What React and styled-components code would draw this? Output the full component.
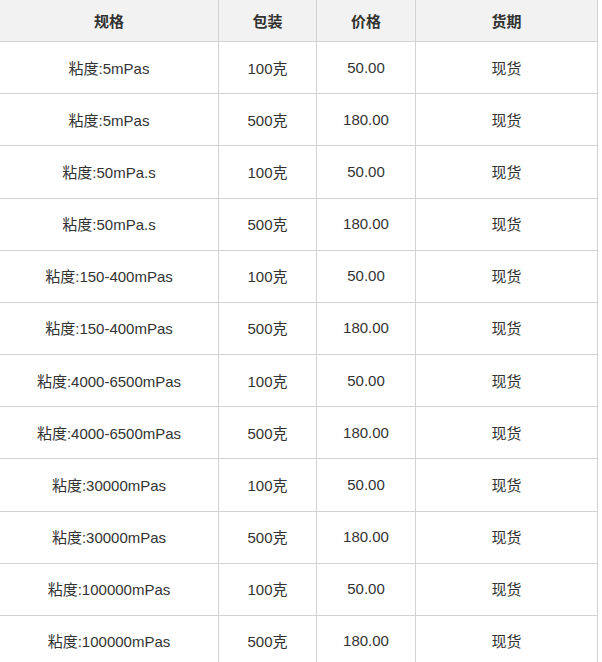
import React from 'react';
import styled, { createGlobalStyle } from 'styled-components';

const GlobalStyle = createGlobalStyle`
  html, body {
    margin: 0;
    padding: 0;
    background: #fff;
  }
  body {
    font-family: "Liberation Sans", Arial, "Noto Sans CJK SC", sans-serif;
    font-size: 15px;
    color: #333;
  }
`;

const Table = styled.table`
  width: 598px;
  border-collapse: separate;
  border-spacing: 0;
  table-layout: fixed;
  font-size: 15px;
`;

const Col = styled.col`
  width: ${p => p.w}px;
`;

const HeadCell = styled.th`
  box-sizing: border-box;
  height: 42px;
  padding: 0 0 1px;
  background: #f2f2f2;
  font-weight: bold;
  text-align: center;
  border-right: 1px solid #d2d2d2;
  border-bottom: 1px solid #d2d2d2;
`;

const Row = styled.tr`
  height: 52.18px;
`;

const Cell = styled.td`
  box-sizing: border-box;
  padding: 0 0 1px;
  text-align: center;
  border-right: 1px solid #d2d2d2;
  border-bottom: 1px solid #d2d2d2;
`;

const specs = [
  '粘度:5mPas',
  '粘度:50mPa.s',
  '粘度:150-400mPas',
  '粘度:4000-6500mPas',
  '粘度:30000mPas',
  '粘度:100000mPas',
];

const rows = specs.flatMap(spec => [
  { spec, pack: '100克', price: '50.00', stock: '现货' },
  { spec, pack: '500克', price: '180.00', stock: '现货' },
]);

const App = () => (
  <>
    <GlobalStyle />
    <Table>
      <colgroup>
        <Col w={219} />
        <Col w={98} />
        <Col w={99} />
        <Col w={182} />
      </colgroup>
      <thead>
        <tr>
          <HeadCell>规格</HeadCell>
          <HeadCell>包装</HeadCell>
          <HeadCell>价格</HeadCell>
          <HeadCell>货期</HeadCell>
        </tr>
      </thead>
      <tbody>
        {rows.map((r, i) => (
          <Row key={i}>
            <Cell>{r.spec}</Cell>
            <Cell>{r.pack}</Cell>
            <Cell>{r.price}</Cell>
            <Cell>{r.stock}</Cell>
          </Row>
        ))}
      </tbody>
    </Table>
  </>
);

export default App;
